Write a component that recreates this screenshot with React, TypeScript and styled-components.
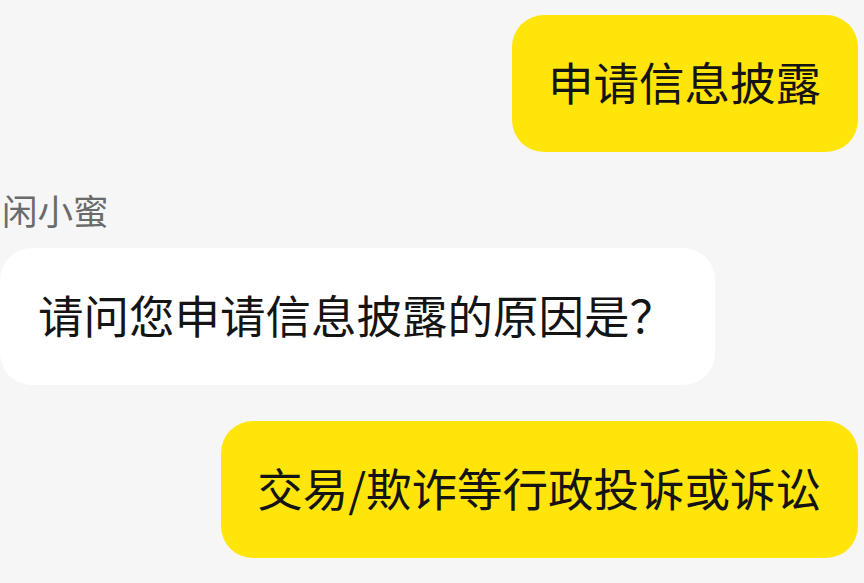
import * as React from 'react';
import styled, { createGlobalStyle } from 'styled-components';

const GlobalStyle = createGlobalStyle`
  html, body {
    margin: 0;
    padding: 0;
    background: #f6f6f6;
    font-family: "Noto Sans CJK SC", "Noto Sans", sans-serif;
  }
`;

interface Message {
  from: 'me' | 'bot';
  text: string;
  name?: string;
}

const messages: Message[] = [
  { from: 'me', text: '申请信息披露' },
  { from: 'bot', name: '闲小蜜', text: '请问您申请信息披露的原因是？' },
  { from: 'me', text: '交易/欺诈等行政投诉或诉讼' },
];

export default function App() {
  return (
    <>
      <GlobalStyle />
      <Chat>
        {messages.map((m, i) => (
          <Row key={i} $mine={m.from === 'me'}>
            {m.name && <Name>{m.name}</Name>}
            <Bubble $mine={m.from === 'me'}>{m.text}</Bubble>
          </Row>
        ))}
      </Chat>
    </>
  );
}

const Chat = styled.div`
  width: 864px;
  height: 583px;
  box-sizing: border-box;
  padding: 15px 6px 0 0;
  display: flex;
  flex-direction: column;
  gap: 36px;
  overflow: hidden;
`;

const Row = styled.div<{ $mine: boolean }>`
  display: flex;
  flex-direction: column;
  align-items: ${(p) => (p.$mine ? 'flex-end' : 'flex-start')};
`;

const Name = styled.div`
  font-size: 35.5px;
  line-height: 43px;
  color: #6b6b6b;
  margin: 0 0 17px 2px;
`;

const Bubble = styled.div<{ $mine: boolean }>`
  height: 137px;
  box-sizing: border-box;
  display: flex;
  align-items: center;
  padding: 0 ${(p) => (p.$mine ? '37px 6px 36px' : '40px 6px 38px')};
  border-radius: 32px;
  background: ${(p) => (p.$mine ? '#ffe50a' : '#ffffff')};
  color: #141414;
  font-size: 45.5px;
  white-space: nowrap;
`;
